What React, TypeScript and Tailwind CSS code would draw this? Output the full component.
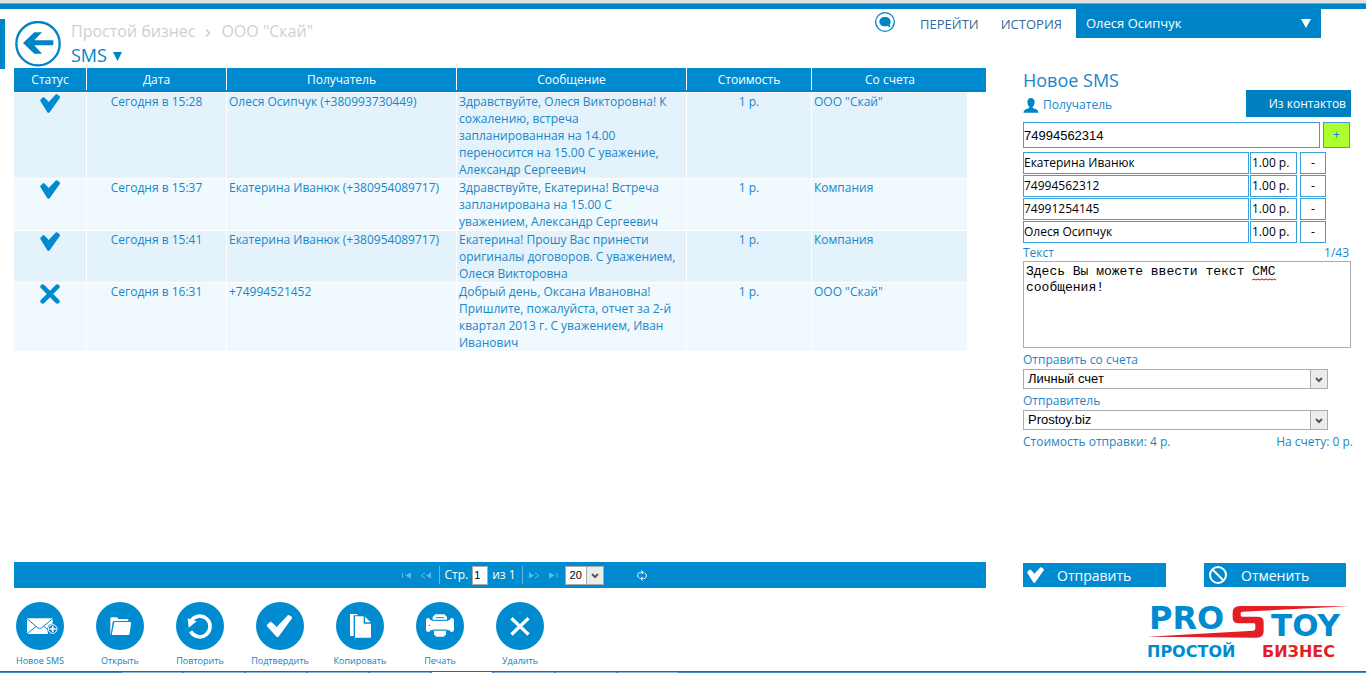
import { useState, type ReactNode } from "react";

type Message = {
  delivered: boolean;
  date: string;
  recipient: string;
  text: string;
  cost: string;
  account: string;
};

const messages: Message[] = [
  {
    delivered: true,
    date: "Сегодня в 15:28",
    recipient: "Олеся Осипчук (+380993730449)",
    text: "Здравствуйте, Олеся Викторовна! К сожалению, встреча запланированная на 14.00 переносится на 15.00 С уважение, Александр Сергеевич",
    cost: "1 р.",
    account: 'ООО "Скай"',
  },
  {
    delivered: true,
    date: "Сегодня в 15:37",
    recipient: "Екатерина Иванюк (+380954089717)",
    text: "Здравствуйте, Екатерина! Встреча запланирована на 15.00 С уважением, Александр Сергеевич",
    cost: "1 р.",
    account: "Компания",
  },
  {
    delivered: true,
    date: "Сегодня в 15:41",
    recipient: "Екатерина Иванюк (+380954089717)",
    text: "Екатерина! Прошу Вас принести оригиналы договоров. С уважением, Олеся Викторовна",
    cost: "1 р.",
    account: "Компания",
  },
  {
    delivered: false,
    date: "Сегодня в 16:31",
    recipient: "+74994521452",
    text: "Добрый день, Оксана Ивановна! Пришлите, пожалуйста, отчет за 2-й квартал 2013 г. С уважением, Иван Иванович",
    cost: "1 р.",
    account: 'ООО "Скай"',
  },
];

const columns = [
  { title: "Статус", width: "w-[73px]" },
  { title: "Дата", width: "w-[140px]" },
  { title: "Получатель", width: "w-[230px]" },
  { title: "Сообщение", width: "w-[230px]" },
  { title: "Стоимость", width: "w-[125px]" },
  { title: "Со счета", width: "" },
];

const recipients = ["Екатерина Иванюк", "74994562312", "74991254145", "Олеся Осипчук"];

function CheckMark({ className }: { className: string }) {
  return (
    <svg viewBox="0 0 60 57" className={className} fill="currentColor" aria-hidden="true">
      <path d="M1 17 L10 9 Q13 9 26 24 L48 1 Q52 0 60 8 L60 11 L28 56 H23 L1 21Z" />
    </svg>
  );
}

function CrossMark({ className }: { className: string }) {
  return (
    <svg viewBox="0 0 60 60" className={className} aria-hidden="true">
      <path d="M8 8 52 52M52 8 8 52" stroke="currentColor" strokeWidth="14" strokeLinecap="round" />
    </svg>
  );
}

function Header() {
  return (
    <header className="flex h-[59px] items-start">
      <div className="mt-[10px] h-[50px] w-[5px] bg-[#0084c8]" />
      <button type="button" aria-label="Назад" className="mt-3 ml-[10px]">
        <svg viewBox="0 0 138 138" className="size-[46px]" aria-hidden="true">
          <circle cx="69" cy="68" r="65" fill="none" stroke="#0084c8" strokeWidth="7" />
          <path d="M24 66 58 34H81L58 58H115V73H58L81 98H58Z" fill="#0084c8" />
        </svg>
      </button>
      <div className="mt-[9px] ml-[10px] flex-1">
        <nav className="flex items-center gap-[10px] text-[16px] leading-[26px] text-[#cfcfcf]">
          <a href="#business">Простой бизнес</a>
          <svg viewBox="0 0 6 8" className="mt-1 h-2 w-[6px]" aria-hidden="true">
            <path d="M1 0.500 4.500 4 1 7.500" fill="none" stroke="currentColor" strokeWidth="1.500" />
          </svg>
          <a href="#sky">ООО "Скай"</a>
        </nav>
        <button type="button" className="flex items-center gap-[6px] text-[18px] leading-[22px] text-[#0084c8]">
          SMS
          <svg viewBox="0 0 9 9" className="mt-[2px] size-[9px]" aria-hidden="true">
            <path d="M0 0H9L4.500 9Z" fill="currentColor" />
          </svg>
        </button>
      </div>
      <button type="button" aria-label="Чат" className="mt-[3px] mr-[25px]">
        <svg viewBox="0 0 60 60" className="size-5" aria-hidden="true">
          <circle cx="30" cy="30" r="28" fill="none" stroke="#0084c8" strokeWidth="4" />
          <path
            d="M30 15C20 15 13 21 13 29S20 43 30 43C33 43 36 43 38 42 41 45 44 46 47 45 45 43 44 41 44 38 46 35 47 32 47 29 47 21 40 15 30 15Z"
            fill="#0084c8"
          />
        </svg>
      </button>
      <nav className="flex gap-[22px] pr-[14px] text-[13px] leading-[30px] text-[#35689b]">
        <a href="#go">ПЕРЕЙТИ</a>
        <a href="#history">ИСТОРИЯ</a>
      </nav>
      <button
        type="button"
        className="mr-[45px] flex h-[29px] w-[245px] items-center justify-between bg-[#0084c8] px-[10px] text-[13px] text-white"
      >
        Олеся Осипчук
        <svg viewBox="0 0 10 9" className="h-[9px] w-[10px]" aria-hidden="true">
          <path d="M0 0H10L5 9Z" fill="currentColor" />
        </svg>
      </button>
    </header>
  );
}

function MessageTable() {
  return (
    <table className="w-full table-fixed border-separate border-spacing-0 text-[12px] leading-[17px] text-[#1a86c8]">
      <thead>
        <tr className="bg-[#008bd0] text-white">
          {columns.map((column, index) => (
            <th key={column.title} scope="col" className={`border-b-2 border-[#0082c6] p-0 font-medium ${column.width}`}>
              <div className={index < 5 ? "h-[22px] border-r border-white leading-[23px]" : "h-[22px] leading-[23px]"}>
                {column.title}
              </div>
            </th>
          ))}
          <td className="w-[18px] border-b-2 border-[#0082c6] p-0" />
        </tr>
      </thead>
      <tbody>
        {messages.map((message, index) => (
          <tr
            key={message.date}
            className={
              index % 2 === 0
                ? "align-top *:border-t *:border-r *:border-white *:bg-[#e4f3fb] *:px-[2px]"
                : "align-top *:border-t *:border-r *:border-white *:bg-[#f0f9fd] *:px-[2px]"
            }
          >
            <td>
              <div className="flex h-[17px] justify-center pt-px text-[#008bd0]" role="img" aria-label={message.delivered ? "Доставлено" : "Ошибка"}>
                {message.delivered ? <CheckMark className="h-[19px] w-5 shrink-0" /> : <CrossMark className="size-5 shrink-0" />}
              </div>
            </td>
            <td className="text-center">{message.date}</td>
            <td>{message.recipient}</td>
            <td>
              <p className="pr-1">{message.text}</p>
            </td>
            <td className="text-center">{message.cost}</td>
            <td>{message.account}</td>
          </tr>
        ))}
      </tbody>
    </table>
  );
}

function PagerArrow({ label, children }: { label: string; children: ReactNode }) {
  return (
    <button type="button" aria-label={label} className="text-[#5fb8e6]">
      <svg viewBox="0 0 11 7" className="h-[7px] w-[11px]" fill="currentColor" stroke="none" aria-hidden="true">
        {children}
      </svg>
    </button>
  );
}

function SelectArrow() {
  return (
    <span className="pointer-events-none absolute inset-y-0 right-0 flex w-[18px] items-center justify-center border border-[#ababab] bg-[#ececec]">
      <svg viewBox="0 0 8 6" className="mt-px h-[6px] w-2" aria-hidden="true">
        <path d="M1 1 4 4 7 1" fill="none" stroke="#555" strokeWidth="2" />
      </svg>
    </span>
  );
}

function Pager() {
  return (
    <div className="flex h-[26px] items-center justify-center bg-[#008bd0] pl-[48px] text-[12px] font-medium text-white">
      <div className="flex items-center gap-2">
        <PagerArrow label="Первая страница">
          <path d="M1 1H2V6H1ZM10 0.500V6.500L4 3.500Z" />
        </PagerArrow>
        <PagerArrow label="Предыдущая страница">
          <path d="M11 0.500V6.500L6 3.500Z" />
          <path d="M5 1 1 3.500 5 6" fill="none" stroke="currentColor" />
        </PagerArrow>
      </div>
      <div className="ml-2 h-[18px] w-px bg-[#5fb8e6]" />
      <label htmlFor="page" className="ml-1">
        Стр.
      </label>
      <input
        id="page"
        defaultValue="1"
        className="mx-1 h-[19px] w-4 border border-[#ababab] bg-white px-px font-['Liberation_Sans',sans-serif] text-[11px] font-normal text-black"
      />
      <span>из 1</span>
      <div className="mx-[6px] h-[18px] w-px bg-[#5fb8e6]" />
      <div className="flex items-center gap-2">
        <PagerArrow label="Следующая страница">
          <path d="M0 0.500V6.500L5 3.500Z" />
          <path d="M6 1 10 3.500 6 6" fill="none" stroke="currentColor" />
        </PagerArrow>
        <PagerArrow label="Последняя страница">
          <path d="M1 0.500V6.500L7 3.500ZM8.500 1H9.500V6H8.500Z" />
        </PagerArrow>
      </div>
      <div className="relative ml-[6px]">
        <select
          aria-label="Строк на странице"
          className="block h-[19px] w-[39px] appearance-none border border-[#ababab] bg-white pl-1 font-['Liberation_Sans',sans-serif] text-[11px] font-normal text-black"
        >
          <option>20</option>
          <option>50</option>
        </select>
        <SelectArrow />
      </div>
      <button type="button" aria-label="Обновить" className="ml-[33px]">
        <svg viewBox="0 0 30 33" className="h-[11px] w-[10px]" fill="none" stroke="currentColor" strokeWidth="3" aria-hidden="true">
          <path d="M13 1 19 7 13 13M18 7H11C5 7 2 11 2 16 2 20 4 23 8 24" />
          <path d="M17 32 11 26 17 20M12 26H19C25 26 28 22 28 17 28 13 26 10 22 9" />
        </svg>
      </button>
    </div>
  );
}

const actions: { label: string; icon: ReactNode }[] = [
  {
    label: "Новое SMS",
    icon: (
      <>
        <path d="M33 49H110V72A17 17 0 0 0 96 96H33Z" fill="#fff" />
        <path d="M33 50 66 78Q71 82 76 78L110 50M33 96 60 73M83 73 96 83" fill="none" stroke="#008bd0" strokeWidth="3" />
        <circle cx="110" cy="81" r="16" fill="#008bd0" />
        <circle cx="110" cy="81" r="13" fill="none" stroke="#fff" strokeWidth="3" />
        <path d="M110 72V90M101 81H119" stroke="#fff" strokeWidth="5" />
      </>
    ),
  },
  {
    label: "Открыть",
    icon: (
      <>
        <path d="M43 94V50Q43 46 47 46H63L68 51H93Q97 51 97 55V57H55Q51 57 50 61L44 98Z" fill="#fff" />
        <path d="M55 60H102Q106 60 105 64L101 95Q100 99 96 99H47Z" fill="#fff" />
      </>
    ),
  },
  {
    label: "Повторить",
    icon: (
      <>
        <path d="M45 57A31 31 0 1 1 44 88" fill="none" stroke="#fff" strokeWidth="11" />
        <path d="M35 49 62 58 38 77Z" fill="#fff" />
      </>
    ),
  },
  {
    label: "Подтвердить",
    icon: <path d="M33 68 43 59Q46 58 62 75L96 39Q99 38 108 45V49L67 105H62L33 73Z" fill="#fff" />,
  },
  {
    label: "Копировать",
    icon: (
      <>
        <path d="M42 36H63L66 40H53V102H42Z" fill="#fff" />
        <path d="M57 43H83V65H105V107H57Z" fill="#fff" />
        <path d="M87 44V61H104Z" fill="#fff" />
      </>
    ),
  },
  {
    label: "Печать",
    icon: (
      <>
        <path d="M50 55V45L58 37H85L93 45V55Z" fill="#fff" />
        <path d="M30 54Q30 48 37 48Q42 48 43 55H101Q102 48 107 48Q114 48 114 54V84Q114 90 107 90Q102 90 101 85H43Q42 90 37 90Q30 90 30 84Z" fill="#fff" />
        <path d="M48 55H96M60 47H84M50 84H94M38 70H43" stroke="#008bd0" strokeWidth="3" />
        <path d="M54 86H90V97L83 104H61L54 97Z" fill="#fff" />
      </>
    ),
  },
  {
    label: "Удалить",
    icon: <path d="M50 52 94 94M94 52 50 94" stroke="#fff" strokeWidth="10" strokeLinecap="square" />,
  },
];

function ActionBar() {
  return (
    <div className="-ml-[14px] flex pt-[14px] pb-[3px]">
      {actions.map((action) => (
        <button key={action.label} type="button" className="flex w-20 flex-col items-center text-[9px] leading-[14px] text-[#0e7fc3]">
          <svg viewBox="0 0 144 144" className="mb-1 size-12" aria-hidden="true">
            <circle cx="72" cy="72" r="72" fill="#008bd0" />
            {action.icon}
          </svg>
          {action.label}
        </button>
      ))}
    </div>
  );
}

function Logo() {
  return (
    <svg
      viewBox="0 -9 206 70"
      className="h-[70px] w-[206px] font-['DejaVu_Sans',sans-serif] font-bold"
      role="img"
      aria-label="Prostoy — Простой бизнес"
    >
      <text x="2" y="25" className="fill-[#008bd0] text-[32px]">
        PRO
      </text>
      <text x="124" y="32" className="fill-[#008bd0] text-[31px]">
        TOY
      </text>
      <g transform="scale(0.3333) translate(-21 -18)">
        <path
          fill="#e31e24"
          d="M627 25 300 24Q278 24 278 44V60Q278 76 296 76H342Q346 76 346 80V92Q346 97 340 98L22 116 350 119Q371 119 371 100V72Q371 56 352 56H306Q302 56 302 50V46Q302 41 308 41Z"
        />
      </g>
      <text x="0" y="53" className="fill-[#008bd0] text-[16px]">
        ПРОСТОЙ
      </text>
      <text x="115" y="53" className="fill-[#e31e24] text-[16px]">
        БИЗНЕС
      </text>
    </svg>
  );
}

function LabeledSelect({ id, label, options }: { id: string; label: string; options: string[] }) {
  return (
    <div>
      <label htmlFor={id} className="block pt-[3px] leading-[18px]">
        {label}
      </label>
      <div className="relative mr-[25px]">
        <select
          id={id}
          className="block h-5 w-full appearance-none border border-[#ababab] bg-white pl-1 font-['Liberation_Sans',sans-serif] text-[13px] leading-[18px] text-black"
        >
          {options.map((option) => (
            <option key={option}>{option}</option>
          ))}
        </select>
        <SelectArrow />
      </div>
    </div>
  );
}

function NewMessageForm() {
  const [text, setText] = useState("Здесь Вы можете ввести текст СМС сообщения!");
  const initialText = text.startsWith("Здесь Вы можете ввести текст СМС");

  return (
    <form className="flex w-[330px] shrink-0 flex-col text-[12px] text-[#1a86c8]" onSubmit={(event) => event.preventDefault()}>
      <div className="flex items-end justify-between pr-[2px]">
        <div>
          <h2 className="text-[18px] leading-[25px]">Новое SMS</h2>
          <label htmlFor="phone" className="flex items-center gap-1 leading-[24px]">
            <svg viewBox="0 0 48 46" className="h-[15px] w-4" fill="#0084c8" aria-hidden="true">
              <path d="M24 0C17 0 13 5 13 13 13 19 16 25 19 28V31C11 34 2 36 1 45H47C46 36 37 34 29 31V28C32 25 35 19 35 13 35 5 31 0 24 0Z" />
            </svg>
            Получатель
          </label>
        </div>
        <button type="button" className="h-[27px] w-[105px] bg-[#007fc0] pr-[5px] text-right text-[12px] font-medium text-white">
          Из контактов
        </button>
      </div>
      <div className="mt-[5px] flex gap-[3px] pr-[3px]">
        <input
          id="phone"
          defaultValue="74994562314"
          className="h-[26px] min-w-0 flex-1 border border-[#3ca0d8] font-['Liberation_Sans',sans-serif] text-[13px] text-black"
        />
        <button type="button" aria-label="Добавить" className="h-[26px] w-[27px] border border-[#3ca0d8] bg-[#adff2f]">
          +
        </button>
      </div>
      <ul className="mt-1 flex flex-col gap-px pr-[27px] text-black">
        {recipients.map((name) => (
          <li key={name} className="flex h-[22px] leading-[20px]">
            <span className="flex-1 border border-[#3ca0d8]">{name}</span>
            <span className="ml-px w-[47px] border border-[#3ca0d8] pl-px">1.00 р.</span>
            <button type="button" aria-label={`Удалить ${name}`} className="ml-[3px] w-[26px] border border-[#3ca0d8]">
              -
            </button>
          </li>
        ))}
      </ul>
      <div className="flex justify-between pt-[2px] pr-1 leading-[16px]">
        <label htmlFor="sms-text">Текст</label>
        <span>1/43</span>
      </div>
      <div className="relative mr-[2px]">
        <textarea
          id="sms-text"
          spellCheck={false}
          value={text}
          onChange={(event) => setText(event.target.value)}
          className="block h-[87px] w-full resize-none border border-[#ababab] px-[2px] py-[2px] font-['Liberation_Mono',monospace] text-[13px] leading-[16px] text-black"
        />
        {initialText && (
          <svg viewBox="0 0 24 3" className="pointer-events-none absolute top-[17px] left-[229px] h-[3px] w-6" aria-hidden="true">
            <path d="M0 2 2 1 4 2 6 1 8 2 10 1 12 2 14 1 16 2 18 1 20 2 22 1 24 2" fill="none" stroke="#f00" />
          </svg>
        )}
      </div>
      <LabeledSelect id="account" label="Отправить со счета" options={["Личный счет", "Компания"]} />
      <LabeledSelect id="sender" label="Отправитель" options={["Prostoy.biz"]} />
      <p className="flex justify-between leading-[23px]">
        <span>Стоимость отправки: 4 р.</span>
        <span>На счету: 0 р.</span>
      </p>
      <div className="mt-auto flex justify-between pt-4 pr-[7px] text-[14px] text-white">
        <button type="submit" className="flex h-6 w-[143px] items-center bg-[#008bd0] pl-1">
          <CheckMark className="mr-[13px] h-4 w-[17px]" />
          Отправить
        </button>
        <button type="button" className="flex h-6 w-[142px] items-center bg-[#008bd0] pl-1">
          <svg viewBox="0 0 20 20" className="mr-[13px] size-5" fill="none" stroke="currentColor" strokeWidth="2" aria-hidden="true">
            <circle cx="10" cy="10" r="8" />
            <path d="M4.500 4.500 15.500 15.500" />
          </svg>
          Отменить
        </button>
      </div>
      <div className="flex justify-end pt-2 pb-[6px]">
        <Logo />
      </div>
    </form>
  );
}

export default function App() {
  return (
    <div className="flex min-h-screen flex-col bg-white font-['Open_Sans','Noto_Sans',sans-serif]">
      <div className="h-[4px] border-b border-[#9a9a9a] bg-[#e2e2e2]" />
      <div className="h-[5px] bg-[#0084c8]" />
      <Header />
      <main className="flex flex-1 gap-[37px] pr-[13px] pl-[14px]">
        <section className="flex min-w-0 flex-1 flex-col">
          <MessageTable />
          <div className="mt-auto pt-4">
            <Pager />
            <ActionBar />
          </div>
        </section>
        <NewMessageForm />
      </main>
      <footer className="flex h-[2px] gap-[2px] border-t border-[#33638f] bg-[#4a86c5] pl-[122px]">
        {[0, 1, 2, 3, 4, 5, 6, 7, 8].map((tab) => (
          <span key={tab} className={tab === 5 ? "w-[60px] bg-white" : "w-[60px] bg-[#8fb4da]"} />
        ))}
      </footer>
    </div>
  );
}
